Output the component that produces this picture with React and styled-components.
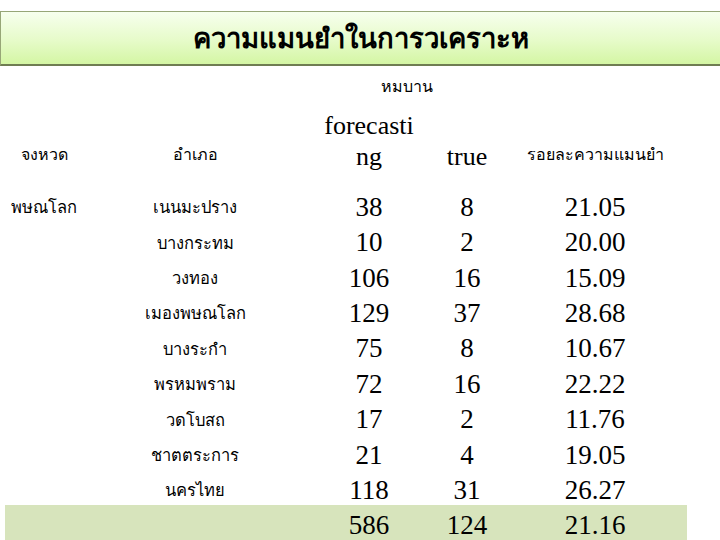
import React from "react";
import styled, { createGlobalStyle } from "styled-components";

const Global = createGlobalStyle`
  html, body { margin: 0; padding: 0; background: #ffffff; }
  body { width: 720px; height: 540px; overflow: hidden; }
`;

const Page = styled.div`
  width: 720px;
  height: 540px;
  display: flex;
  flex-direction: column;
  padding-top: 11px;
  box-sizing: border-box;
`;

const TitleBar = styled.div`
  height: 57px;
  box-sizing: border-box;
  border-top: 1px solid #97a677;
  border-left: 1px solid #97a677;
  border-bottom: 2px solid #6f7d52;
  background: linear-gradient(180deg, #f7ffee 0%, #e6fbc9 55%, #d4f6a4 100%);
  display: flex;
  align-items: center;
  justify-content: center;
`;

const Title = styled.h1`
  margin: 0;
  font-family: "DejaVu Sans", "Noto Sans", sans-serif;
  font-weight: bold;
  font-size: 27.5px;
  color: #000;
`;

const Caption = styled.div`
  height: 44px;
  display: flex;
  align-items: center;
  padding-left: 381px;
  font-family: "DejaVu Sans", "Noto Sans", sans-serif;
  font-size: 16px;
  color: #000;
`;

const Table = styled.div`
  margin-left: 5px;
  width: 682px;
  display: grid;
  grid-template-columns: 78px 224px 124px 72px 184px;
  grid-template-rows: 78px repeat(10, 35.4px);
`;

const HeadCell = styled.div`
  display: flex;
  align-items: flex-end;
  justify-content: center;
  text-align: center;
  padding-bottom: ${(p) => (p.$serif ? 14 : 21)}px;
  box-sizing: border-box;
  font-family: ${(p) => (p.$serif ? '"Liberation Serif", serif' : '"DejaVu Sans", "Noto Sans", sans-serif')};
  font-size: ${(p) => (p.$serif ? 26 : 16)}px;
  line-height: ${(p) => (p.$serif ? "31px" : "20px")};
  color: #000;
  white-space: nowrap;
`;

const Cell = styled.div`
  display: flex;
  align-items: center;
  justify-content: center;
  padding-top: 7px;
  box-sizing: border-box;
  background: ${(p) => (p.$total ? "#d7e4bc" : "transparent")};
  font-family: ${(p) => (p.$serif ? '"Liberation Serif", serif' : '"DejaVu Sans", "Noto Sans", sans-serif')};
  font-size: ${(p) => (p.$serif ? 27 : 16.5)}px;
  color: #000;
  white-space: nowrap;
`;

const rows = [
  ["พษณโลก", "เนนมะปราง", "38", "8", "21.05"],
  ["", "บางกระทม", "10", "2", "20.00"],
  ["", "วงทอง", "106", "16", "15.09"],
  ["", "เมองพษณโลก", "129", "37", "28.68"],
  ["", "บางระกำ", "75", "8", "10.67"],
  ["", "พรหมพราม", "72", "16", "22.22"],
  ["", "วดโบสถ", "17", "2", "11.76"],
  ["", "ชาตตระการ", "21", "4", "19.05"],
  ["", "นครไทย", "118", "31", "26.27"],
];

export default function App() {
  return (
    <>
      <Global />
      <Page>
        <TitleBar>
          <Title>ความแมนยำในการวเคราะห</Title>
        </TitleBar>
        <Caption>หมบาน</Caption>
        <Table>
          <HeadCell>จงหวด</HeadCell>
          <HeadCell>อำเภอ</HeadCell>
          <HeadCell $serif>
            forecasti
            <br />
            ng
          </HeadCell>
          <HeadCell $serif>true</HeadCell>
          <HeadCell>รอยละความแมนยำ</HeadCell>
          {rows.map((r, i) => (
            <React.Fragment key={i}>
              <Cell>{r[0]}</Cell>
              <Cell>{r[1]}</Cell>
              <Cell $serif>{r[2]}</Cell>
              <Cell $serif>{r[3]}</Cell>
              <Cell $serif>{r[4]}</Cell>
            </React.Fragment>
          ))}
          <Cell $total />
          <Cell $total />
          <Cell $total $serif>586</Cell>
          <Cell $total $serif>124</Cell>
          <Cell $total $serif>21.16</Cell>
        </Table>
      </Page>
    </>
  );
}
